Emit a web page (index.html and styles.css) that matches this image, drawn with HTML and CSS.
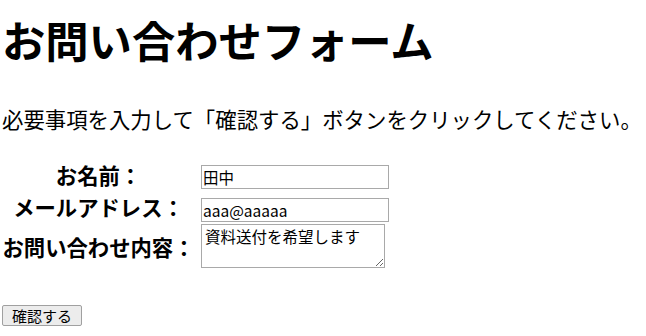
FILE: index.html
```html
<!DOCTYPE html>
<html lang="ja">
<head>
<meta charset="utf-8">
<title>お問い合わせフォーム</title>
<link rel="stylesheet" href="styles.css">
</head>
<body>
<h1 class="title">お問い合わせフォーム</h1>
<p class="lead">必要事項を入力して「確認する」ボタンをクリックしてください。</p>
<form class="form">
  <div class="fields">
    <label class="label" for="name">お名前：</label>
    <div class="cell"><input class="input" id="name" type="text" value="田中"></div>
    <label class="label" for="mail">メールアドレス：</label>
    <div class="cell"><input class="input" id="mail" type="text" value="aaa@aaaaa"></div>
    <label class="label label-multi" for="msg">お問い合わせ内容：</label>
    <div class="cell"><textarea class="textarea" id="msg">資料送付を希望します</textarea></div>
  </div>
  <div class="actions"><button class="button" type="button">確認する</button></div>
</form>
</body>
</html>
```
FILE: styles.css
```css
html, body {
  background: #ffffff;
}
body {
  margin: 0;
  padding: 0 2px;
  color: #000000;
  font-family: "Noto Sans CJK JP", "Noto Sans", sans-serif;
  font-size: 21.33px;
}
.title {
  margin: 14px 0 0;
  font-size: 43.3px;
  line-height: 51px;
  font-weight: 700;
  white-space: nowrap;
}
.lead {
  margin: 38px 0 0;
  font-size: 21.4px;
  line-height: 32px;
  font-weight: 400;
  white-space: nowrap;
}
.form {
  margin: 26px 0 0;
}
.fields {
  display: grid;
  grid-template-columns: 193px auto;
  grid-template-rows: 32px 33px 40px;
  align-items: center;
  justify-content: start;
  column-gap: 6px;
}
.label {
  margin-bottom: 6px;
  text-align: center;
  font-weight: 700;
  font-size: 21.33px;
  line-height: 31px;
  white-space: nowrap;
}
.label-multi {
  margin-bottom: 0;
}
.cell {
  display: flex;
  align-items: center;
}
.input, .textarea {
  box-sizing: border-box;
  margin: 0;
  border: 1px solid #a9a9a9;
  border-radius: 0;
  background: #ffffff;
  color: #000000;
  font-family: "Noto Sans CJK JP", "Noto Sans", sans-serif;
  font-size: 15.5px;
}
.input {
  width: 188px;
  height: 24px;
  padding: 0 1px;
  line-height: 22px;
}
.textarea {
  width: 184px;
  height: 44px;
  padding: 1px 3px;
  line-height: 20px;
  resize: both;
  overflow: hidden;
}
.actions {
  margin: 31px 0 0;
}
.button {
  box-sizing: border-box;
  width: 80px;
  height: 21px;
  margin: 0;
  padding: 0;
  border: 1px solid #a0a0a0;
  border-radius: 2px;
  background: #ececec;
  color: #000000;
  font-family: "Noto Sans CJK JP", "Noto Sans", sans-serif;
  font-size: 15px;
  line-height: 19px;
}
```
